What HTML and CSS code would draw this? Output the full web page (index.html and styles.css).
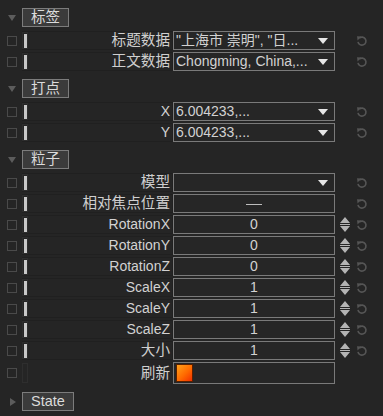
FILE: index.html
```html
<!DOCTYPE html>
<html lang="zh">

<head>
    <meta charset="UTF-8">
    <title>属性面板</title>
    <link rel="stylesheet" href="styles.css">
</head>

<body>

    <!-- 标签 -->
    <div class="group">
        <div class="group-head">
            <span class="caret"></span>
            <span class="group-btn">标签</span>
        </div>
        <div class="row">
            <span class="check"></span>
            <div class="name"><span class="slot"><i class="bar"></i></span><span class="label cjk">标题数据</span></div>
            <div class="field select"><span class="value">"上海市 崇明", "日...</span><span class="arrow"></span></div>
            <span class="spin"></span>
            <span class="reset"><svg width="12" height="12" viewBox="0 0 12 12"><path d="M3.2 3.2 A4 4 0 1 1 2 6.8" fill="none" stroke="#555" stroke-width="1.6"/><path d="M1 1.2 L5.2 1.6 L1.6 5.4 Z" fill="#555"/></svg></span>
        </div>
        <div class="row">
            <span class="check"></span>
            <div class="name"><span class="slot"><i class="bar"></i></span><span class="label cjk">正文数据</span></div>
            <div class="field select"><span class="value">Chongming, China,...</span><span class="arrow"></span></div>
            <span class="spin"></span>
            <span class="reset"><svg width="12" height="12" viewBox="0 0 12 12"><path d="M3.2 3.2 A4 4 0 1 1 2 6.8" fill="none" stroke="#555" stroke-width="1.6"/><path d="M1 1.2 L5.2 1.6 L1.6 5.4 Z" fill="#555"/></svg></span>
        </div>
    </div>

    <!-- 打点 -->
    <div class="group">
        <div class="group-head">
            <span class="caret"></span>
            <span class="group-btn">打点</span>
        </div>
        <div class="row">
            <span class="check"></span>
            <div class="name"><span class="slot"><i class="bar"></i></span><span class="label">X</span></div>
            <div class="field select"><span class="value">6.004233,...</span><span class="arrow"></span></div>
            <span class="spin"></span>
            <span class="reset"><svg width="12" height="12" viewBox="0 0 12 12"><path d="M3.2 3.2 A4 4 0 1 1 2 6.8" fill="none" stroke="#555" stroke-width="1.6"/><path d="M1 1.2 L5.2 1.6 L1.6 5.4 Z" fill="#555"/></svg></span>
        </div>
        <div class="row">
            <span class="check"></span>
            <div class="name"><span class="slot"><i class="bar"></i></span><span class="label">Y</span></div>
            <div class="field select"><span class="value">6.004233,...</span><span class="arrow"></span></div>
            <span class="spin"></span>
            <span class="reset"><svg width="12" height="12" viewBox="0 0 12 12"><path d="M3.2 3.2 A4 4 0 1 1 2 6.8" fill="none" stroke="#555" stroke-width="1.6"/><path d="M1 1.2 L5.2 1.6 L1.6 5.4 Z" fill="#555"/></svg></span>
        </div>
    </div>

    <!-- 粒子 -->
    <div class="group">
        <div class="group-head">
            <span class="caret"></span>
            <span class="group-btn">粒子</span>
        </div>
        <div class="row">
            <span class="check"></span>
            <div class="name"><span class="slot"><i class="bar"></i></span><span class="label cjk">模型</span></div>
            <div class="field select"><span class="value"></span><span class="arrow"></span></div>
            <span class="spin"></span>
            <span class="reset"><svg width="12" height="12" viewBox="0 0 12 12"><path d="M3.2 3.2 A4 4 0 1 1 2 6.8" fill="none" stroke="#555" stroke-width="1.6"/><path d="M1 1.2 L5.2 1.6 L1.6 5.4 Z" fill="#555"/></svg></span>
        </div>
        <div class="row">
            <span class="check"></span>
            <div class="name"><span class="slot"><i class="bar"></i></span><span class="label cjk">相对焦点位置</span></div>
            <div class="field center"><span class="dash"></span></div>
            <span class="spin"></span>
            <span class="reset"><svg width="12" height="12" viewBox="0 0 12 12"><path d="M3.2 3.2 A4 4 0 1 1 2 6.8" fill="none" stroke="#555" stroke-width="1.6"/><path d="M1 1.2 L5.2 1.6 L1.6 5.4 Z" fill="#555"/></svg></span>
        </div>
        <div class="row">
            <span class="check"></span>
            <div class="name"><span class="slot"><i class="bar"></i></span><span class="label">RotationX</span></div>
            <div class="field center">0</div>
            <span class="spin"><svg width="10" height="15" viewBox="0 0 10 15"><path d="M5 0 L10 6 L0 6 Z M0 7 H10 V8 H0 Z M0 9 L10 9 L5 15 Z" fill="#b4b4b4"/></svg></span>
            <span class="reset"><svg width="12" height="12" viewBox="0 0 12 12"><path d="M3.2 3.2 A4 4 0 1 1 2 6.8" fill="none" stroke="#555" stroke-width="1.6"/><path d="M1 1.2 L5.2 1.6 L1.6 5.4 Z" fill="#555"/></svg></span>
        </div>
        <div class="row">
            <span class="check"></span>
            <div class="name"><span class="slot"><i class="bar"></i></span><span class="label">RotationY</span></div>
            <div class="field center">0</div>
            <span class="spin"><svg width="10" height="15" viewBox="0 0 10 15"><path d="M5 0 L10 6 L0 6 Z M0 7 H10 V8 H0 Z M0 9 L10 9 L5 15 Z" fill="#b4b4b4"/></svg></span>
            <span class="reset"><svg width="12" height="12" viewBox="0 0 12 12"><path d="M3.2 3.2 A4 4 0 1 1 2 6.8" fill="none" stroke="#555" stroke-width="1.6"/><path d="M1 1.2 L5.2 1.6 L1.6 5.4 Z" fill="#555"/></svg></span>
        </div>
        <div class="row">
            <span class="check"></span>
            <div class="name"><span class="slot"><i class="bar"></i></span><span class="label">RotationZ</span></div>
            <div class="field center">0</div>
            <span class="spin"><svg width="10" height="15" viewBox="0 0 10 15"><path d="M5 0 L10 6 L0 6 Z M0 7 H10 V8 H0 Z M0 9 L10 9 L5 15 Z" fill="#b4b4b4"/></svg></span>
            <span class="reset"><svg width="12" height="12" viewBox="0 0 12 12"><path d="M3.2 3.2 A4 4 0 1 1 2 6.8" fill="none" stroke="#555" stroke-width="1.6"/><path d="M1 1.2 L5.2 1.6 L1.6 5.4 Z" fill="#555"/></svg></span>
        </div>
        <div class="row">
            <span class="check"></span>
            <div class="name"><span class="slot"><i class="bar"></i></span><span class="label">ScaleX</span></div>
            <div class="field center">1</div>
            <span class="spin"><svg width="10" height="15" viewBox="0 0 10 15"><path d="M5 0 L10 6 L0 6 Z M0 7 H10 V8 H0 Z M0 9 L10 9 L5 15 Z" fill="#b4b4b4"/></svg></span>
            <span class="reset"><svg width="12" height="12" viewBox="0 0 12 12"><path d="M3.2 3.2 A4 4 0 1 1 2 6.8" fill="none" stroke="#555" stroke-width="1.6"/><path d="M1 1.2 L5.2 1.6 L1.6 5.4 Z" fill="#555"/></svg></span>
        </div>
        <div class="row">
            <span class="check"></span>
            <div class="name"><span class="slot"><i class="bar"></i></span><span class="label">ScaleY</span></div>
            <div class="field center">1</div>
            <span class="spin"><svg width="10" height="15" viewBox="0 0 10 15"><path d="M5 0 L10 6 L0 6 Z M0 7 H10 V8 H0 Z M0 9 L10 9 L5 15 Z" fill="#b4b4b4"/></svg></span>
            <span class="reset"><svg width="12" height="12" viewBox="0 0 12 12"><path d="M3.2 3.2 A4 4 0 1 1 2 6.8" fill="none" stroke="#555" stroke-width="1.6"/><path d="M1 1.2 L5.2 1.6 L1.6 5.4 Z" fill="#555"/></svg></span>
        </div>
        <div class="row">
            <span class="check"></span>
            <div class="name"><span class="slot"><i class="bar"></i></span><span class="label">ScaleZ</span></div>
            <div class="field center">1</div>
            <span class="spin"><svg width="10" height="15" viewBox="0 0 10 15"><path d="M5 0 L10 6 L0 6 Z M0 7 H10 V8 H0 Z M0 9 L10 9 L5 15 Z" fill="#b4b4b4"/></svg></span>
            <span class="reset"><svg width="12" height="12" viewBox="0 0 12 12"><path d="M3.2 3.2 A4 4 0 1 1 2 6.8" fill="none" stroke="#555" stroke-width="1.6"/><path d="M1 1.2 L5.2 1.6 L1.6 5.4 Z" fill="#555"/></svg></span>
        </div>
        <div class="row">
            <span class="check"></span>
            <div class="name"><span class="slot"><i class="bar"></i></span><span class="label cjk">大小</span></div>
            <div class="field center">1</div>
            <span class="spin"><svg width="10" height="15" viewBox="0 0 10 15"><path d="M5 0 L10 6 L0 6 Z M0 7 H10 V8 H0 Z M0 9 L10 9 L5 15 Z" fill="#b4b4b4"/></svg></span>
            <span class="reset"><svg width="12" height="12" viewBox="0 0 12 12"><path d="M3.2 3.2 A4 4 0 1 1 2 6.8" fill="none" stroke="#555" stroke-width="1.6"/><path d="M1 1.2 L5.2 1.6 L1.6 5.4 Z" fill="#555"/></svg></span>
        </div>
        <div class="row row-tall">
            <span class="check"></span>
            <div class="name plain"><span class="slot"></span><span class="label cjk">刷新</span></div>
            <div class="field"><span class="swatch"></span></div>
            <span class="spin"></span>
            <span class="reset"></span>
        </div>
    </div>

    <!-- State -->
    <div class="group">
        <div class="group-head">
            <span class="caret closed"></span>
            <span class="group-btn">State</span>
        </div>
    </div>

</body>

</html>
```

FILE: styles.css
```css
/* Panel dasar */
body {
    margin: 0;
    padding: 8px 0 0 0;
    background-color: #252525;
    color: #d2d2d2;
    font-family: "Liberation Sans", "Noto Sans CJK SC", sans-serif;
    font-size: 14px;
    width: 383px;
    height: 416px;
    overflow: hidden;
}

.group {
    margin-bottom: 8px;
}

/* Header grup */
.group-head {
    display: flex;
    align-items: center;
    height: 19px;
    margin-bottom: 4px;
}

.caret {
    width: 0;
    height: 0;
    margin-left: 8px;
    margin-right: 6px;
    border-left: 4px solid transparent;
    border-right: 4px solid transparent;
    border-top: 6px solid #5c5c5c;
}

.caret.closed {
    margin-left: 10px;
    margin-right: 6px;
    border-top: 4px solid transparent;
    border-bottom: 4px solid transparent;
    border-left: 6px solid #5c5c5c;
    border-right: none;
}

.group-btn {
    box-sizing: border-box;
    height: 19px;
    line-height: 17px;
    padding: 0 8px;
    min-width: 47px;
    text-align: center;
    background-color: #3b3b3b;
    border: 1px solid #7c7c7c;
    color: #dcdcdc;
    font-size: 14.5px;
}

/* Baris properti */
.row {
    display: flex;
    align-items: center;
    height: 19px;
    margin-bottom: 2px;
}

.row-tall {
    height: 22px;
}

.check {
    box-sizing: border-box;
    width: 10px;
    height: 10px;
    margin-left: 7px;
    margin-right: 5px;
    border: 1px solid #4a4a4a;
}

.name {
    box-sizing: border-box;
    display: flex;
    align-items: center;
    width: 151px;
    height: 100%;
    border: 1px solid #202020;
    border-left: none;
}

.name.plain {
    border-color: transparent;
}

.slot {
    box-sizing: border-box;
    display: flex;
    align-items: center;
    justify-content: center;
    width: 6px;
    height: 100%;
    border: 1px solid #2e2e2e;
}

.bar {
    display: block;
    width: 3px;
    height: 14px;
    background-color: #c8c8c8;
}

.label {
    flex: 1;
    text-align: right;
    padding-right: 2px;
    white-space: nowrap;
    line-height: 17px;
}

.label.cjk {
    font-size: 14.6px;
    color: #cfcfcf;
}

.field {
    box-sizing: border-box;
    display: flex;
    align-items: center;
    width: 162px;
    height: 100%;
    border: 1px solid #7a7a7a;
    background-color: #262626;
    padding: 0 2px;
    line-height: 17px;
    white-space: nowrap;
    overflow: hidden;
}

.select .value {
    flex: 1;
    overflow: hidden;
}

.arrow {
    width: 0;
    height: 0;
    margin-right: 4px;
    border-left: 5px solid transparent;
    border-right: 5px solid transparent;
    border-top: 6px solid #e6e6e6;
}

.center {
    justify-content: center;
}

.dash {
    display: block;
    width: 16px;
    height: 1px;
    background-color: #bdbdbd;
    margin-top: 2px;
}

.swatch {
    box-sizing: border-box;
    display: block;
    width: 17px;
    height: 18px;
    border: 1px solid #5a2000;
    background: linear-gradient(135deg, #ffa21a 0%, #ff6a00 55%, #f23000 100%);
}

.spin {
    display: flex;
    width: 10px;
    margin-left: 5px;
}

.reset {
    display: flex;
    width: 12px;
    margin-left: 6px;
}
```
